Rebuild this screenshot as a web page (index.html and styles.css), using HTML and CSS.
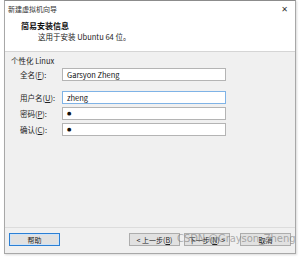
FILE: index.html
```html
<!DOCTYPE html>
<html lang="zh-CN">
<head>
<meta charset="utf-8">
<link rel="stylesheet" href="styles.css">
</head>
<body>
<div class="window">
  <div class="header">
    <div class="titlebar">
      <span class="title">新建虚拟机向导</span>
      <span class="close">✕</span>
    </div>
    <div class="heading">简易安装信息</div>
    <div class="sub">这用于安装 Ubuntu 64 位。</div>
  </div>
  <div class="body">
    <div class="group">个性化 Linux</div>
    <div class="row first"><label>全名(<u>F</u>):</label><div class="input">Garsyon Zheng</div></div>
    <div class="row gap"><label>用户名(<u>U</u>):</label><div class="input focus">zheng</div></div>
    <div class="row"><label>密码(<u>P</u>):</label><div class="input dot">●</div></div>
    <div class="row"><label>确认(<u>C</u>):</label><div class="input dot">●</div></div>
  </div>
  <div class="footer">
    <div class="btn default">帮助</div>
    <div class="spacer"></div>
    <div class="btn">&lt; 上一步(<u>B</u>)</div>
    <div class="btn next">下一步(<u>N</u>) &gt;</div>
    <div class="btn cancel">取消</div>
  </div>
  <div class="watermark">CSDN @Grayson_Zheng</div>
</div>
</body>
</html>
```
FILE: styles.css
```css
* { box-sizing: border-box; }
html, body { margin: 0; padding: 0; background: #ffffff; }
body {
  font-family: "Noto Sans CJK SC", "Noto Sans", sans-serif;
  font-size: 7.5px;
  color: #1a1a1a;
  width: 300px;
  height: 257px;
  overflow: hidden;
}
.window {
  position: relative;
  margin-left: 4px;
  width: 292px;
  height: 254px;
  border: 1px solid #a8a8a8;
  border-top-color: #8c8c8c;
  background: #f0f0f0;
  box-shadow: 1px 1px 2px rgba(0,0,0,0.15);
}
.header {
  background: #ffffff;
  height: 51px;
  border-bottom: 1px solid #d5d5d5;
  padding-top: 3px;
}
.titlebar {
  display: flex;
  justify-content: space-between;
  align-items: center;
  height: 10px;
  padding: 0 7px 0 3px;
}
.title { font-size: 7px; color: #333; }
.close { font-size: 8px; color: #333; font-family: "DejaVu Sans", sans-serif; }
.heading {
  margin: 6px 0 0 16px;
  font-weight: bold;
  font-size: 8px;
  line-height: 11px;
  color: #111;
}
.sub {
  margin: 0 0 0 33px;
  line-height: 11px;
  color: #222;
}
.body {
  height: 176px;
  padding: 4px 0 0 6px;
  border-bottom: 1px solid #dcdcdc;
}
.group { line-height: 10px; color: #222; }
.row {
  display: flex;
  align-items: center;
  height: 13px;
  margin-top: 3px;
}
.row.first { margin-top: 2px; }
.row.gap { margin-top: 10px; }
.row label {
  width: 51px;
  padding-left: 9px;
  color: #222;
}
.input {
  width: 164px;
  height: 13px;
  border: 1px solid #b4b4b4;
  background: #fff;
  padding-left: 4px;
  line-height: 11px;
  color: #111;
}
.input.focus { border-color: #7fb3e6; }
.input.dot { font-size: 5px; line-height: 11px; font-family: "DejaVu Sans", sans-serif; }
.footer {
  display: flex;
  align-items: center;
  padding: 5px 0 0 4px;
}
.btn {
  height: 13px;
  width: 51px;
  border: 1px solid #adadad;
  background: #e1e1e1;
  display: flex;
  align-items: center;
  justify-content: center;
  color: #222;
  font-size: 7px;
}
.btn.default { border-color: #2b7fd4; border-width: 1px; box-shadow: inset 0 0 0 1px #cfe3f7; }
.spacer { flex: 1; }
.btn.next { margin-left: 4px; width: 46px; }
.btn.cancel { margin-left: 10px; width: 51px; margin-right: 4px; }
.watermark {
  position: absolute;
  left: 172px;
  top: 232px;
  white-space: nowrap;
  font-family: "DejaVu Sans", sans-serif;
  font-size: 10px;
  color: rgba(110,110,110,0.55);
  letter-spacing: -0.1px;
  pointer-events: none;
}
```
